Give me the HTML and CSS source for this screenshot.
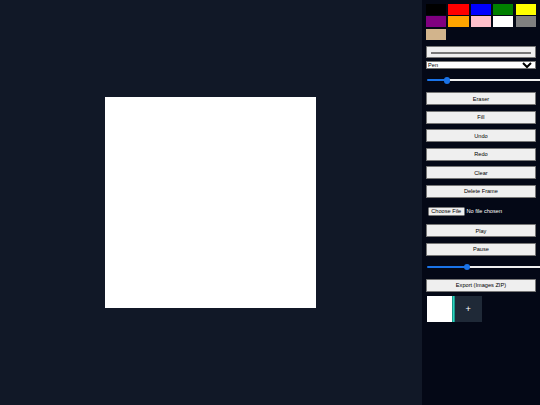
FILE: index.html
```html
<!DOCTYPE html>
<html lang="en">
<head>
<meta charset="utf-8">
<title>Animation Studio</title>
<link rel="stylesheet" href="styles.css">
</head>
<body>
<div class="app">
  <main class="stage">
    <canvas class="drawing" width="500" height="500"></canvas>
  </main>
  <aside class="sidebar">
    <div class="palette">
      <div class="swatch c-black"></div>
      <div class="swatch c-red"></div>
      <div class="swatch c-blue"></div>
      <div class="swatch c-green"></div>
      <div class="swatch c-yellow"></div>
      <div class="swatch c-purple"></div>
      <div class="swatch c-orange"></div>
      <div class="swatch c-pink"></div>
      <div class="swatch c-white"></div>
      <div class="swatch c-gray"></div>
      <div class="swatch c-tan"></div>
    </div>
    <input class="color-input" type="color" value="#000000">
    <select class="tool-select">
      <option>Pen</option>
      <option>Line</option>
      <option>Rectangle</option>
      <option>Circle</option>
    </select>
    <input class="range range-size" type="range" min="1" max="50" value="5">
    <button class="btn">Eraser</button>
    <button class="btn">Fill</button>
    <button class="btn">Undo</button>
    <button class="btn">Redo</button>
    <button class="btn">Clear</button>
    <button class="btn">Delete Frame</button>
    <input class="file-input" type="file">
    <button class="btn">Play</button>
    <button class="btn">Pause</button>
    <input class="range range-fps" type="range" min="0" max="100" value="18">
    <button class="btn btn-export">Export (Images ZIP)</button>
    <div class="frames">
      <div class="frame-thumb"></div>
      <div class="frame-marker"></div>
      <div class="add-frame">+</div>
    </div>
  </aside>
</div>
</body>
</html>
```

FILE: styles.css
```css
html, body {
  margin: 0;
  padding: 0;
  overflow: hidden;
  background: #111827;
}

.app {
  zoom: 0.421875;
  width: 1280px;
  height: 960px;
  display: flex;
  font-family: "Liberation Sans", Arial, sans-serif;
}

.stage {
  flex: 1;
  display: flex;
  align-items: center;
  justify-content: center;
  background: #111827;
}

.drawing {
  display: block;
  width: 500px;
  height: 500px;
  background: #ffffff;
}

.sidebar {
  width: 280px;
  box-sizing: border-box;
  padding: 10px;
  background: #040816;
  display: flex;
  flex-direction: column;
  align-items: stretch;
  overflow: hidden;
}

.palette {
  display: grid;
  grid-template-columns: repeat(5, 1fr);
  grid-auto-rows: 26px;
  gap: 3px 5px;
  margin-bottom: 14px;
}

.c-black { background: #000000; }
.c-red { background: #ff0000; }
.c-blue { background: #0000ff; }
.c-green { background: #008000; }
.c-yellow { background: #ffff00; }
.c-purple { background: #800080; }
.c-orange { background: #ffa500; }
.c-pink { background: #ffc0cb; }
.c-white { background: #ffffff; }
.c-gray { background: #808080; }
.c-tan { background: #d2b48c; }

.color-input {
  display: block;
  width: 100%;
  height: 29px;
  box-sizing: border-box;
  padding: 8px;
  margin: 0 0 8px 0;
  border: 1px solid #767676;
  border-radius: 2px;
  background: #efefef;
}

.tool-select {
  display: block;
  width: 100%;
  height: 19px;
  margin: 0 0 16px 0;
  font-family: "Liberation Sans", Arial, sans-serif;
  font-size: 13.33px;
}

.range {
  -webkit-appearance: none;
  appearance: none;
  display: block;
  width: 500px;
  height: 16px;
  margin: 2px 2px 20px 2px;
  padding: 0;
  background: transparent;
  flex: none;
}

.range::-webkit-slider-runnable-track {
  height: 6px;
  border-radius: 3px;
  background: #efefef;
}

.range-size::-webkit-slider-runnable-track {
  background: linear-gradient(to right, #1a73e8 0, #1a73e8 47px, #efefef 47px);
}

.range-fps::-webkit-slider-runnable-track {
  background: linear-gradient(to right, #1a73e8 0, #1a73e8 95px, #efefef 95px);
}

.range::-webkit-slider-thumb {
  -webkit-appearance: none;
  appearance: none;
  width: 16px;
  height: 16px;
  margin-top: -5px;
  border: none;
  border-radius: 50%;
  background: #1a73e8;
}

.range-fps {
  margin-top: 6px;
}

.btn {
  display: block;
  width: 100%;
  height: 31px;
  box-sizing: border-box;
  margin: 0 0 13px 0;
  font-family: "Liberation Sans", Arial, sans-serif;
  font-size: 13.33px;
  color: #000000;
  background: #efefef;
  border: 1px solid #767676;
  border-radius: 2px;
}

.btn-export {
  margin-bottom: 10px;
}

.file-input {
  display: block;
  margin: 8px 0 20px 4px;
  height: 21px;
  font-family: "Liberation Sans", Arial, sans-serif;
  font-size: 13.33px;
  color: #ffffff;
}

.frames {
  display: flex;
  height: 62px;
  margin-left: 1px;
}

.frame-thumb {
  width: 61px;
  background: #ffffff;
}

.frame-marker {
  width: 6px;
  background: linear-gradient(to right, #0f766e, #2dd4bf 50%, #0f766e);
}

.add-frame {
  width: 64px;
  display: flex;
  align-items: center;
  justify-content: center;
  background: #1f2937;
  color: #ffffff;
  font-size: 22px;
}
```
